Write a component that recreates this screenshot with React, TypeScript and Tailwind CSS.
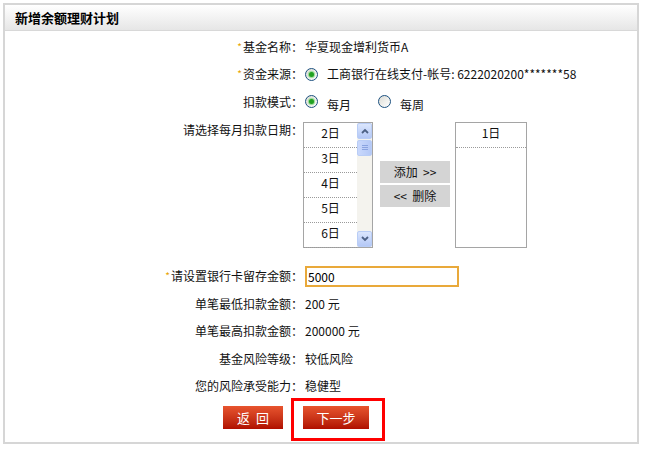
import { useState } from 'react'

const font = { fontFamily: '"Noto Sans CJK SC", "Liberation Sans", sans-serif' }

function Star() {
  return <span className="text-[#e8a400] text-[10px] mr-[1px] relative top-[-1px]">*</span>
}

function Radio({ checked }: { checked: boolean }) {
  return (
    <span className="inline-flex items-center justify-center w-[13px] h-[13px] rounded-full border border-[#1c5180] bg-gradient-to-br from-[#dcdcd5] to-white shrink-0">
      {checked && <span className="w-[5px] h-[5px] rounded-full bg-[#21a121] shadow-[0_0_1px_1px_rgba(120,210,120,0.8)]" />}
    </span>
  )
}

function Row({ label, star, children }: { label: string; star?: boolean; children: React.ReactNode }) {
  return (
    <div className="grid grid-cols-[298px_1fr] items-center h-[27.5px]">
      <div className="text-right">
        {star && <Star />}
        {label}：
      </div>
      <div className="pl-[2px] flex items-center">{children}</div>
    </div>
  )
}

function ArrowBtn({ up }: { up: boolean }) {
  return (
    <div className="w-[15px] h-[16px] rounded-[2px] border border-[#b9cdf6] bg-gradient-to-b from-[#dbe6fd] to-[#b4c8f6] flex items-center justify-center">
      <svg width="8" height="6" viewBox="0 0 8 6">
        <path d={up ? 'M1 5 L4 2 L7 5' : 'M1 1 L4 4 L7 1'} stroke="#4d6185" strokeWidth="1.8" fill="none" />
      </svg>
    </div>
  )
}

export default function App() {
  const [days] = useState(['2日', '3日', '4日', '5日', '6日'])

  return (
    <div className="w-[645px] h-[449px] bg-white pt-[3px] pl-[3px] text-[12px] text-[#111]" style={font}>
      <div className="w-[636px] h-[441px] border-2 border-[#d6d6d6] relative">
        {/* 标题栏 */}
        <div className="h-[26px] bg-gradient-to-b from-white to-[#e6e6e6] border-b border-[#d8d8d8] pl-[10px] flex items-center text-[13px] font-bold text-black">
          新增余额理财计划
        </div>

        <div className="pt-[2px]">
          <Row label="基金名称" star>华夏现金增利货币A</Row>
          <Row label="资金来源" star>
            <Radio checked />
            <span className="ml-[9px]">工商银行在线支付-帐号: 6222020200*******58</span>
          </Row>
          <Row label="扣款模式">
            <Radio checked />
            <span className="ml-[9px] mr-[27px] relative top-[3px]">每月</span>
            <Radio checked={false} />
            <span className="ml-[9px] relative top-[3px]">每周</span>
          </Row>

          {/* 扣款日期选择 */}
          <div className="grid grid-cols-[298px_1fr] mt-[6px]">
            <div className="text-right leading-[14px] pt-[1px]">请选择每月扣款日期：</div>
            <div className="flex items-start">
              <div className="w-[70px] h-[126px] border border-[#a5a5a5] flex">
                <div className="flex-1">
                  {days.map((d) => (
                    <div key={d} className="h-[25px] pb-[3px] border-b border-dotted border-[#9a9a9a] flex items-center justify-center">
                      {d}
                    </div>
                  ))}
                </div>
                <div className="w-[15px] bg-[#f4f3ee] flex flex-col justify-between">
                  <div>
                    <ArrowBtn up />
                    <div className="w-[15px] h-[16px] mt-[1px] rounded-[2px] border border-[#b9cdf6] bg-gradient-to-r from-[#c9d8fc] to-[#b4c8f6] flex flex-col items-center justify-center gap-[1px]">
                      <span className="w-[6px] h-[1px] bg-[#8aa3e0]" />
                      <span className="w-[6px] h-[1px] bg-[#8aa3e0]" />
                      <span className="w-[6px] h-[1px] bg-[#8aa3e0]" />
                    </div>
                  </div>
                  <ArrowBtn up={false} />
                </div>
              </div>

              <div className="ml-[7px] mt-[39px] flex flex-col gap-[2px]">
                <div className="w-[70px] h-[22px] bg-[#d4d4d4] flex items-center justify-center whitespace-pre">添加  &gt;&gt;</div>
                <div className="w-[70px] h-[22px] bg-[#d4d4d4] flex items-center justify-center whitespace-pre">&lt;&lt;  删除</div>
              </div>

              <div className="ml-[5px] w-[72px] h-[126px] border border-[#a5a5a5]">
                <div className="h-[25px] pb-[3px] border-b border-dotted border-[#9a9a9a] flex items-center justify-center">1日</div>
              </div>
            </div>
          </div>

          <div className="mt-[15px]">
            <Row label="请设置银行卡留存金额" star>
              <input
                defaultValue="5000"
                className="w-[154px] h-[21px] border-2 border-[#e9a93a] px-[1px] outline-none text-[12px] text-black"
                style={font}
              />
            </Row>
            <Row label="单笔最低扣款金额">200 元</Row>
            <Row label="单笔最高扣款金额">200000 元</Row>
            <Row label="基金风险等级">较低风险</Row>
            <Row label="您的风险承受能力">稳健型</Row>
          </div>

          {/* 操作按钮 */}
          <div className="grid grid-cols-[298px_1fr] mt-[6px]">
            <div className="flex justify-end pr-[20px]">
              <button className="w-[60px] h-[23px] bg-gradient-to-b from-[#e8542e] to-[#b00d00] text-white text-[13px] tracking-[6px] pl-[6px]">
                返回
              </button>
            </div>
            <div className="relative">
              <button className="w-[66px] h-[23px] bg-gradient-to-b from-[#e8542e] to-[#b00d00] text-white text-[13px]">
                下一步
              </button>
              <div className="absolute left-[-12px] top-[-8px] w-[94px] h-[43px] border-[3px] border-[#ff0000] pointer-events-none" />
            </div>
          </div>
        </div>
      </div>
    </div>
  )
}
